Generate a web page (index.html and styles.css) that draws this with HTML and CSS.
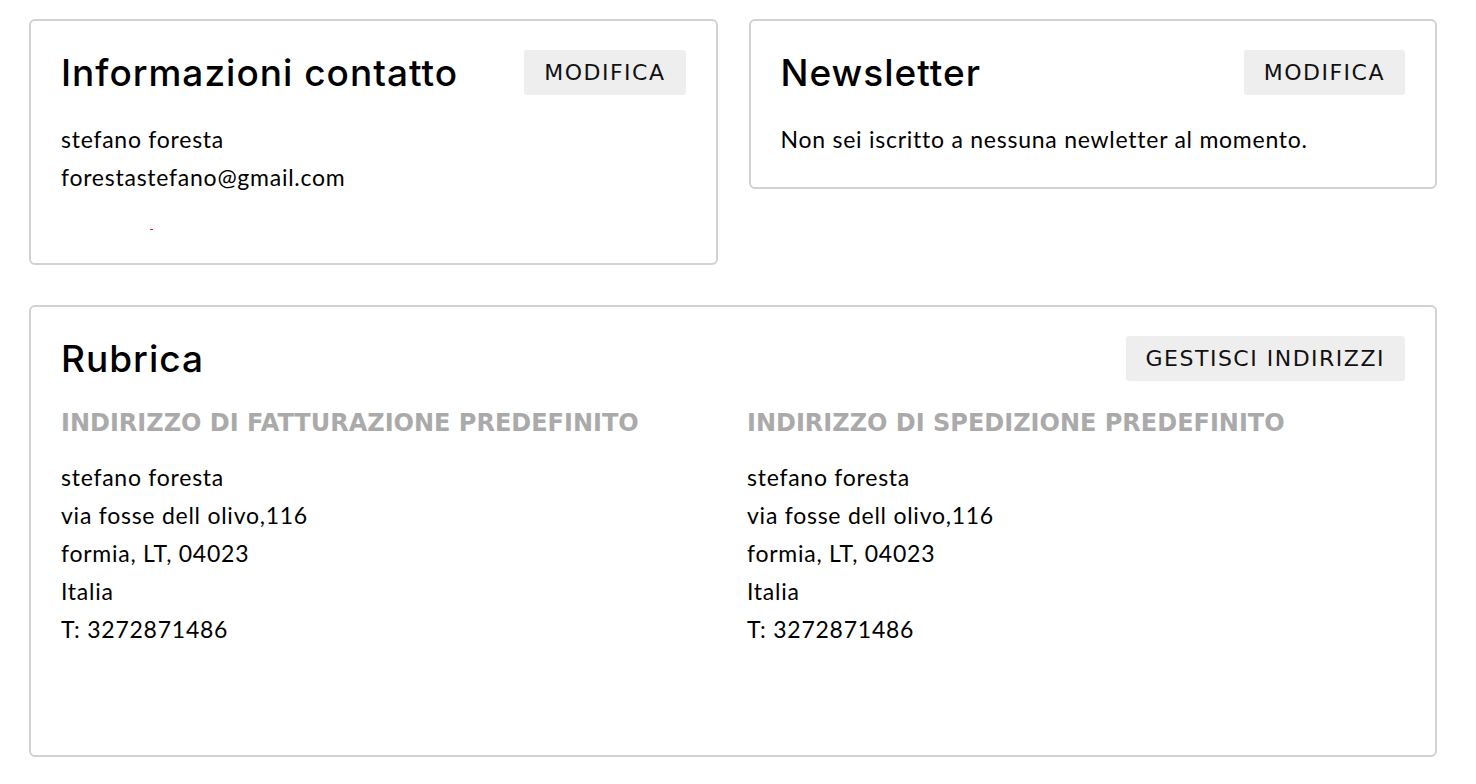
FILE: index.html
```html
<!DOCTYPE html>
<html lang="it">
<head>
<meta charset="utf-8">
<title>Account</title>
<link rel="stylesheet" href="styles.css">
</head>
<body>
<div class="page">
  <div class="row">
    <section class="card">
      <header class="card-head">
        <h2 class="card-title">Informazioni contatto</h2>
        <a class="btn">MODIFICA</a>
      </header>
      <div class="card-body">
        <p class="line">stefano foresta</p>
        <p class="line">forestastefano@gmail.com</p>
        <p class="line"><span class="dot"></span></p>
      </div>
    </section>
    <section class="card card-top">
      <header class="card-head">
        <h2 class="card-title">Newsletter</h2>
        <a class="btn">MODIFICA</a>
      </header>
      <div class="card-body">
        <p class="line">Non sei iscritto a nessuna newletter al momento.</p>
      </div>
    </section>
  </div>
  <section class="card card-wide">
    <header class="card-head">
      <h2 class="card-title">Rubrica</h2>
      <a class="btn">GESTISCI INDIRIZZI</a>
    </header>
    <div class="addresses">
      <div class="address">
        <h3 class="label">INDIRIZZO DI FATTURAZIONE PREDEFINITO</h3>
        <p class="line">stefano foresta</p>
        <p class="line">via fosse dell olivo,116</p>
        <p class="line">formia, LT, 04023</p>
        <p class="line">Italia</p>
        <p class="line">T: 3272871486</p>
      </div>
      <div class="address">
        <h3 class="label">INDIRIZZO DI SPEDIZIONE PREDEFINITO</h3>
        <p class="line">stefano foresta</p>
        <p class="line">via fosse dell olivo,116</p>
        <p class="line">formia, LT, 04023</p>
        <p class="line">Italia</p>
        <p class="line">T: 3272871486</p>
      </div>
    </div>
  </section>
</div>
</body>
</html>
```
FILE: styles.css
```css
* { box-sizing: border-box; }
html, body { margin: 0; padding: 0; background: #fff; }
body {
  font-family: Lato, "Liberation Sans", sans-serif;
  color: #111;
}
.page {
  padding: 19px 39px 0 29px;
  display: flex;
  flex-direction: column;
  gap: 40px;
}
.row {
  display: flex;
  gap: 31px;
  align-items: flex-start;
}
.card {
  flex: 1 1 0;
  border: 2px solid #d2d2d2;
  border-radius: 6px;
  padding: 29px 30px 29px 30px;
}
.card-head {
  display: flex;
  justify-content: space-between;
  align-items: center;
  height: 45px;
}
.card-title {
  margin: 0;
  font-family: Inter, "DejaVu Sans", sans-serif;
  font-weight: 500;
  font-size: 37px;
  letter-spacing: 1px;
  color: #000;
}
.btn {
  display: inline-flex;
  align-items: center;
  justify-content: center;
  height: 45px;
  padding: 0 20px;
  background: #eeeeee;
  border-radius: 3px;
  font-family: "DejaVu Sans", sans-serif;
  font-size: 22px;
  color: #111;
  letter-spacing: 1.5px;
}
.card-body { margin-top: 25px; }
.line {
  margin: 0;
  font-size: 23px;
  letter-spacing: 0.75px;
  line-height: 38px;
  height: 38px;
  color: #000;
}
.dot {
  display: inline-block;
  width: 3px;
  height: 1px;
  background: #d0187a;
  margin-left: 89px;
  vertical-align: -6px;
}
.addresses {
  display: grid;
  grid-template-columns: 686px 1fr;
  margin-top: 27px;
  padding-bottom: 78px;
}
.label {
  margin: 0 0 20px 0;
  font-family: "DejaVu Sans", sans-serif;
  font-weight: 700;
  font-size: 24px;
  line-height: 30px;
  color: #aaaaaa;
}
```
